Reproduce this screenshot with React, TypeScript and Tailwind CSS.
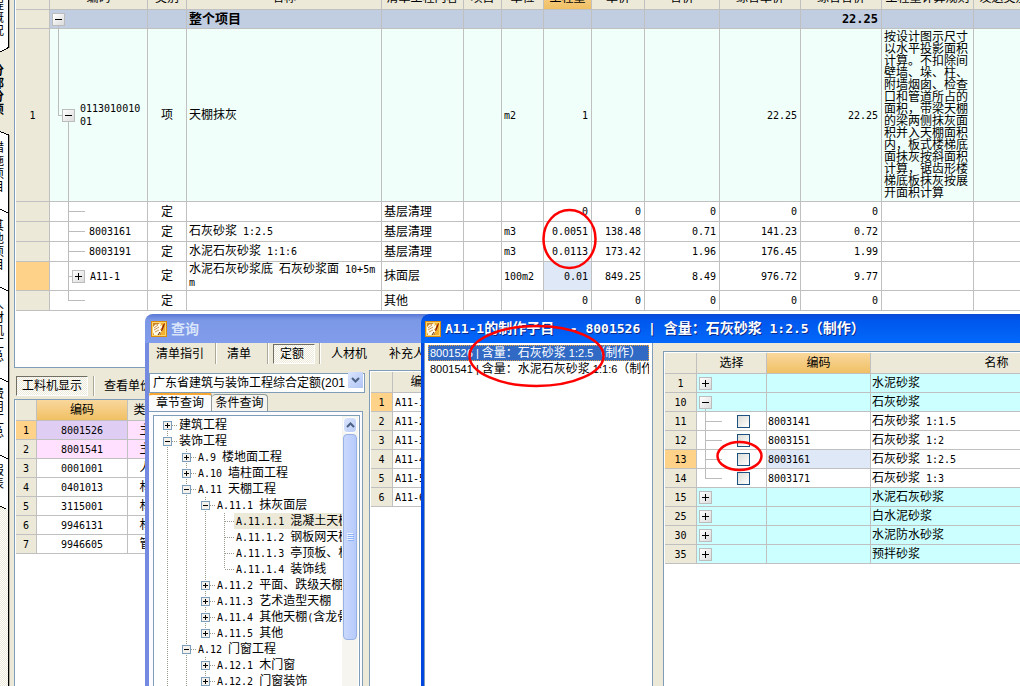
import { useState, type ReactNode } from 'react'
import clsx from 'clsx'

const FONT = "font-['Liberation_Sans','Noto_Sans_CJK_SC',sans-serif]"

// Latin runs use a fixed-pitch face, half as wide as a Chinese character
function T({ children, bold }: { children: string; bold?: boolean }) {
  const runs = children.match(/[\x20-\x7e]+|[^\x20-\x7e]+/g) ?? []
  return (
    <>
      {runs.map((run, i) =>
        /^[\x20-\x7e]/.test(run) ? (
          <span
            key={i}
            className={clsx("font-['DejaVu_Sans_Mono',monospace]", bold ? 'text-[12px]' : 'text-[10px]')}
          >
            {run}
          </span>
        ) : (
          <span key={i}>{run}</span>
        )
      )}
    </>
  )
}

function AppIcon() {
  return (
    <svg viewBox="0 0 16 16" className="h-4 w-4 shrink-0">
      <rect width="16" height="16" fill="#d98a10" />
      <rect x="1" y="1" width="14" height="14" fill="#ffd76a" />
      <rect x="2" y="2" width="12" height="12" fill="#c98428" />
      <path d="M9 2h5v12h-4z" fill="#f3b02c" />
      <path d="M2 6l3-3 1 1 3-2 1 1-1 2 2-1v2L9 9h2l-1 2-2 3H3l-1-3z" fill="#fffbe8" />
      <path d="M3 7l4-3M3 9l5-3M4 11l4-2" stroke="#b5651a" strokeWidth="0.7" />
      <path d="M14 2c-2 1-3 4-4 8h1c1-2 2-4 3-8z" fill="#8d1f0c" />
      <path d="M9 11l-2 3" stroke="#5c2a08" />
    </svg>
  )
}

function Expander({ open, className }: { open?: boolean; className?: string }) {
  const [expanded, setExpanded] = useState(!!open)
  return (
    <button
      aria-label={expanded ? '折叠' : '展开'}
      onClick={() => setExpanded(!expanded)}
      className={clsx(
        'relative block h-[13px] w-[13px] shrink-0 border border-[#bcbcbc] bg-linear-to-br from-white to-[#dcdcdc]',
        className
      )}
    >
      <svg viewBox="0 0 11 11" className="h-[11px] w-[11px]" shapeRendering="crispEdges">
        <path d={expanded ? 'M2 5.5h7' : 'M2 5.5h7M5.5 2v7'} stroke="#000" />
      </svg>
    </button>
  )
}

const cell = 'border-r border-b border-[#c0c0c0] p-0'
const headCell = clsx(cell, 'bg-[#ece9d8] text-center font-normal whitespace-nowrap')
const hotHead = clsx(cell, 'bg-linear-to-b from-[#f9d79c] to-[#f0c062] text-center font-normal whitespace-nowrap')
const numCell = clsx(cell, 'text-center')

const sideTabs = [
  { label: '工程概况', box: 'h-[52px] items-end pb-[14px]' },
  { label: '分部分项', box: 'h-[79px] items-start pt-[13px] font-bold' },
  { label: '措施项目', box: 'h-[79px] items-start pt-[11px]' },
  { label: '其他项目', box: 'h-[79px] items-start pt-[10px]' },
  { label: '人材机汇总', box: 'h-[91px] items-start pt-[10px]' },
  { label: '费用汇总', box: 'h-[77px] items-start pt-[8px]' },
  { label: '报表', box: 'h-[52px] items-start pt-[8px]' },
]

function SideTabs() {
  return (
    <nav className="relative w-[14px] shrink-0 overflow-hidden bg-[#ece9d8]">
      <svg className="absolute inset-0 h-full w-full" shapeRendering="crispEdges">
        <path d="M0 0H8.500V47L0 52z" fill="#fff" />
        <path d="M0 131L8.500 135V510L0 506z" fill="#fff" />
        <path
          d="M8.500 0V47.500L0 52M0 131.500L8.500 135V2000M0 209l8 4M0 287l8 4M0 378l8 4M0 455l8 4M0 506l8 4"
          fill="none"
          stroke="#000"
        />
        <path d="M9.500 0V48M9.500 135V2000" stroke="#aca899" />
      </svg>
      <div className="relative flex h-full flex-col">
        {sideTabs.map((tab) => (
          <button key={tab.label} className={clsx('flex w-[12px] shrink-0', tab.box)}>
            <span className="-ml-2 block w-3 text-[12px] leading-[13px] break-all">{tab.label}</span>
          </button>
        ))}
        <div className="w-2 flex-1 bg-[repeating-conic-gradient(#fff_0_25%,#ece9d8_0_50%)] bg-[length:2px_2px]" />
      </div>
    </nav>
  )
}

const itemColumns = [
  { label: '', width: 'w-[34px]' },
  { label: '编码', width: 'w-[98px]' },
  { label: '类别', width: 'w-[39px]' },
  { label: '名称', width: 'w-[195px]' },
  { label: '清单工程内容', width: 'w-[82px]' },
  { label: '项目', width: 'w-[38px]' },
  { label: '单位', width: 'w-[42px]' },
  { label: '工程量', width: 'w-[48px]' },
  { label: '单价', width: 'w-[53px]' },
  { label: '合价', width: 'w-[75px]' },
  { label: '综合单价', width: 'w-[81px]' },
  { label: '综合合价', width: 'w-[81px]' },
  { label: '工程量计算规则', width: 'w-[92px]' },
  { label: '发送类别', width: 'w-[60px]' },
]

const ruleText =
  '按设计图示尺寸以水平投影面积计算。不扣除间壁墙、垛、柱、附墙烟囱、检查口和管道所占的面积，带梁天棚的梁两侧抹灰面积并入天棚面积内，板式楼梯底面抹灰按斜面积计算，锯齿形楼梯底板抹灰按展开面积计算'

type Item = {
  kind: 'root' | 'item' | 'leaf' | 'group' | 'last'
  no?: string
  code?: string
  type?: string
  name?: string
  content?: string
  unit?: string
  nums: string[]
  rule?: string
  height: string
  bg?: string
}

const items: Item[] = [
  { kind: 'root', name: '整个项目', nums: ['', '', '', '', '22.25'], height: 'h-[19px]', bg: 'bg-[#c1cde0]' },
  {
    kind: 'item', no: '1', code: '011301001001', type: '项', name: '天棚抹灰', unit: 'm2',
    nums: ['1', '', '', '22.25', '22.25'], rule: ruleText, height: 'h-[173px]', bg: 'bg-[#f0fffa]',
  },
  { kind: 'leaf', type: '定', content: '基层清理', nums: ['0', '0', '0', '0', '0'], height: 'h-5' },
  {
    kind: 'leaf', code: '8003161', type: '定', name: '石灰砂浆 1:2.5', content: '基层清理', unit: 'm3',
    nums: ['0.0051', '138.48', '0.71', '141.23', '0.72'], height: 'h-5',
  },
  {
    kind: 'leaf', code: '8003191', type: '定', name: '水泥石灰砂浆 1:1:6', content: '基层清理', unit: 'm3',
    nums: ['0.0113', '173.42', '1.96', '176.45', '1.99'], height: 'h-5',
  },
  {
    kind: 'group', code: 'A11-1', type: '定', name: '水泥石灰砂浆底 石灰砂浆面 10+5mm', content: '抹面层',
    unit: '100m2', nums: ['0.01', '849.25', '8.49', '976.72', '9.77'], height: 'h-[29px]',
  },
  { kind: 'last', type: '定', content: '其他', nums: ['0', '0', '0', '0', '0'], height: 'h-5' },
]

const branchPaths: Record<Item['kind'], ReactNode> = {
  root: <line x1="8.500" x2="8.500" y1="50%" y2="100%" />,
  item: (
    <>
      <line x1="8.500" x2="8.500" y1="0" y2="50%" />
      <line x1="8" x2="14" y1="50%" y2="50%" />
      <line x1="18.500" x2="18.500" y1="50%" y2="100%" />
    </>
  ),
  leaf: (
    <>
      <line x1="18.500" x2="18.500" y1="0" y2="100%" />
      <line x1="18" x2="35" y1="50%" y2="50%" />
    </>
  ),
  group: (
    <>
      <line x1="18.500" x2="18.500" y1="0" y2="100%" />
      <line x1="18" x2="24" y1="50%" y2="50%" />
    </>
  ),
  last: (
    <>
      <line x1="18.500" x2="18.500" y1="0" y2="50%" />
      <line x1="18" x2="35" y1="50%" y2="50%" />
    </>
  ),
}

const codeIndent: Record<Item['kind'], string> = {
  root: 'pl-[2px]',
  item: 'pl-[12px]',
  leaf: 'pl-[39px]',
  group: 'pl-[22px]',
  last: 'pl-[39px]',
}

function ItemTable() {
  return (
    <table className="-mt-[13px] w-[1018px] table-fixed border-separate border-spacing-0 text-[12px] leading-3">
      <thead>
        <tr className="h-[23px]">
          {itemColumns.map((col, i) => (
            <th key={i} className={clsx(col.width, col.label === '工程量' ? hotHead : headCell)}>
              {col.label}
            </th>
          ))}
        </tr>
      </thead>
      <tbody>
        {items.map((item, i) => (
          <tr key={i} className={clsx(item.height, item.bg)}>
            <td className={clsx(numCell, item.kind === 'group' ? 'bg-[#ffd28a]' : 'bg-[#ece9d8]')}>
              <T>{item.no ?? ''}</T>
            </td>
            <td className={clsx(cell, 'relative')}>
              <svg className="absolute inset-0 h-full w-full" stroke="#bcbcbc" shapeRendering="crispEdges">
                {branchPaths[item.kind]}
              </svg>
              <div className={clsx('flex items-center gap-[5px]', codeIndent[item.kind])}>
                {(item.kind === 'root' || item.kind === 'item') && <Expander open />}
                {item.kind === 'group' && <Expander />}
                <span className="relative max-w-[62px] break-all">
                  <T>{item.code ?? ''}</T>
                </span>
              </div>
            </td>
            <td className={numCell}>{item.type}</td>
            <td className={clsx(cell, 'pl-[2px] break-all', item.kind === 'root' && 'text-[13px] font-bold')}>
              <T>{item.name ?? ''}</T>
            </td>
            <td className={clsx(cell, 'pl-[2px]')}>{item.content}</td>
            <td className={cell} />
            <td className={clsx(cell, 'pl-[2px]')}>
              <T>{item.unit ?? ''}</T>
            </td>
            {item.nums.map((num, n) => (
              <td
                key={n}
                className={clsx(
                  cell,
                  'pr-[3px] text-right',
                  item.kind === 'root' && 'font-bold',
                  item.kind === 'group' && n === 0 && 'bg-[#dfe8f6]'
                )}
              >
                <T bold={item.kind === 'root'}>{num}</T>
              </td>
            ))}
            <td className={clsx(cell, 'px-[2px]')}>{item.rule}</td>
            <td className={cell} />
          </tr>
        ))}
      </tbody>
    </table>
  )
}

const materials = [
  { code: '8001526', type: '主', bg: 'bg-[#ffe0ff]' },
  { code: '8001541', type: '主', bg: 'bg-[#ffe0ff]' },
  { code: '0001001', type: '人' },
  { code: '0401013', type: '材' },
  { code: '3115001', type: '材' },
  { code: '9946131', type: '材' },
  { code: '9946605', type: '管' },
]

function MaterialTable() {
  return (
    <table className="w-[148px] table-fixed border-separate border-spacing-0 text-[12px] leading-3">
      <thead>
        <tr className="h-[21px]">
          <th className={clsx(headCell, 'w-[21px]')} />
          <th className={clsx(hotHead, 'w-[91px]')}>编码</th>
          <th className={clsx(headCell, 'w-[36px]')}>类别</th>
        </tr>
      </thead>
      <tbody>
        {materials.map((m, i) => (
          <tr key={m.code} className={clsx('h-[19px]', m.bg)}>
            <td className={clsx(numCell, i === 0 ? 'bg-[#ffd28a]' : 'bg-[#ece9d8]')}>
              <T>{String(i + 1)}</T>
            </td>
            <td className={clsx(numCell, i === 0 && 'bg-[#dfcdf4]')}>
              <T>{m.code}</T>
            </td>
            <td className={numCell}>{m.type}</td>
          </tr>
        ))}
      </tbody>
    </table>
  )
}

const pressed =
  'border border-t-[#716f64] border-l-[#716f64] border-r-white border-b-white bg-[repeating-conic-gradient(#fff_0_25%,#ece9d8_0_50%)] bg-[length:2px_2px]'

function Separator() {
  return <div className="w-[2px] shrink-0 self-stretch border-l border-[#aca899] bg-white" />
}

type Node = {
  depth: number
  label: string
  state?: 'open' | 'closed'
  first?: boolean
  last?: boolean
  selected?: boolean
}

const nodes: Node[] = [
  { depth: 0, label: '建筑工程', state: 'closed', first: true },
  { depth: 0, label: '装饰工程', state: 'open' },
  { depth: 1, label: 'A.9 楼地面工程', state: 'closed' },
  { depth: 1, label: 'A.10 墙柱面工程', state: 'closed' },
  { depth: 1, label: 'A.11 天棚工程', state: 'open' },
  { depth: 2, label: 'A.11.1 抹灰面层', state: 'open' },
  { depth: 3, label: 'A.11.1.1 混凝土天棚', selected: true },
  { depth: 3, label: 'A.11.1.2 钢板网天棚' },
  { depth: 3, label: 'A.11.1.3 亭顶板、板' },
  { depth: 3, label: 'A.11.1.4 装饰线', last: true },
  { depth: 2, label: 'A.11.2 平面、跌级天棚', state: 'closed' },
  { depth: 2, label: 'A.11.3 艺术造型天棚', state: 'closed' },
  { depth: 2, label: 'A.11.4 其他天棚(含龙骨)', state: 'closed' },
  { depth: 2, label: 'A.11.5 其他', state: 'closed', last: true },
  { depth: 1, label: 'A.12 门窗工程', state: 'open' },
  { depth: 2, label: 'A.12.1 木门窗', state: 'closed' },
  { depth: 2, label: 'A.12.2 门窗装饰', state: 'closed' },
]

function TreeRow({ node }: { node: Node }) {
  const axis = 13.5 + node.depth * 19
  const width = 23 + node.depth * 19
  return (
    <li className="flex h-4 items-center whitespace-nowrap">
      <svg width={width} height="16" className="shrink-0" shapeRendering="crispEdges">
        <g stroke="#9a9a8c" strokeDasharray="1 1">
          {Array.from({ length: node.depth }, (_, d) => (
            <path key={d} d={`M${13.5 + d * 19} 0v16`} />
          ))}
          {!node.first && <path d={`M${axis} 0v8`} />}
          {!node.last && <path d={`M${axis} 8v8`} />}
          <path d={`M${axis} 8.500h9`} />
        </g>
        {node.state && (
          <>
            <rect x={axis - 4} y="4.500" width="8" height="8" fill="#f4f2ea" stroke="#7b9ebd" />
            <path
              d={`M${axis - 2.5} 8.500h5${node.state === 'closed' ? `M${axis} 6v5` : ''}`}
              stroke="#000"
            />
          </>
        )}
      </svg>
      <button className={clsx('h-4 shrink-0 pl-[2px] text-left', node.selected && 'grow bg-[#ece9d8]')}>
        <T>{node.label}</T>
      </button>
    </li>
  )
}

function ChapterTree() {
  return (
    <div className="flex min-h-0 flex-1 overflow-hidden border border-b-0 border-[#7f9db9] bg-white pr-[1px]">
      <ul className="min-w-0 flex-1 overflow-hidden pt-[1px] text-[12px] leading-4">
        {nodes.map((node) => (
          <TreeRow key={node.label} node={node} />
        ))}
      </ul>
      <div className="flex w-4 flex-col bg-[#f6f5f0] px-px pt-[1px]">
        <button
          aria-label="向上滚动"
          className="grid h-4 w-full place-items-center rounded-sm border border-white bg-linear-to-br from-[#dbe5fd] to-[#b9cbf6]"
        >
          <svg viewBox="0 0 9 6" className="h-[6px] w-[9px]">
            <path d="M1 5l3.500-3.500L8 5" fill="none" stroke="#4d6185" strokeWidth="2" />
          </svg>
        </button>
        <div className="mt-[1px] grid h-[206px] w-full place-items-center rounded-sm border border-[#98b1e4] bg-linear-to-r from-[#c9d8fc] to-[#b6cafb]">
          <svg viewBox="0 0 7 8" className="h-2 w-[7px]" shapeRendering="crispEdges">
            <path d="M0 .5h6M0 2.500h6M0 4.500h6M0 6.500h6" stroke="#eef4fe" />
            <path d="M1 1.500h6M1 3.500h6M1 5.500h6M1 7.500h6" stroke="#8cb0f8" />
          </svg>
        </div>
      </div>
    </div>
  )
}

function QueryWindow() {
  return (
    <section className="absolute top-[314px] bottom-0 left-[145px] flex w-[320px] flex-col overflow-hidden rounded-tl-lg bg-[#ece9d8]">
      <header className="flex h-[29px] shrink-0 items-center gap-1 bg-linear-to-b from-[#5a78d4] via-[#7b98e6] via-20% to-[#819cea] pl-[6px]">
        <AppIcon />
        <h2 className="text-[14px] leading-4 font-bold text-[#d8e4fa]">查询</h2>
      </header>
      <div className="flex min-h-0 flex-1 flex-col border-l-4 border-[#7489e0]">
        <div className="flex h-[21px] shrink-0 items-center whitespace-nowrap text-[12px] leading-4">
          <button className="w-[66px] pr-[4px]">清单指引</button>
          <Separator />
          <button className="w-[50px] pr-[6px]">清单</button>
          <Separator />
          <button className={clsx(pressed, 'mx-[4px] h-5 w-[42px] pr-[4px]')}>定额</button>
          <Separator />
          <button className="w-[56px]">人材机</button>
          <button className="ml-3 w-[60px] text-left">补充人材机</button>
        </div>
        <div className="flex min-h-0 flex-1 gap-1 pt-[6px]">
          <div className="flex w-[216px] shrink-0 flex-col">
            <div className="relative h-5 shrink-0">
              <select
                aria-label="定额库"
                className="h-5 w-full appearance-none border border-[#7f9db9] bg-white pr-[18px] pl-[3px] text-[12px] leading-4"
              >
                <option>广东省建筑与装饰工程综合定额(201</option>
              </select>
              <span className="pointer-events-none absolute top-[2px] right-[2px] grid h-4 w-[15px] place-items-center bg-linear-to-br from-[#dbe5fd] to-[#b0c4f4]">
                <svg viewBox="0 0 9 6" className="h-[6px] w-[9px]">
                  <path d="M1 1l3.500 3.500L8 1" fill="none" stroke="#4d6185" strokeWidth="2" />
                </svg>
              </span>
            </div>
            <div className="mt-[2px] flex h-[19px] shrink-0 items-end text-[12px] leading-4">
              <button className="h-[19px] w-[63px] rounded-t-sm border-t-[3px] border-r border-t-[#f7a834] border-r-[#919b9c] bg-[#fcfcfe]">
                章节查询
              </button>
              <button className="h-[17px] w-[56px] rounded-t-sm border border-b-0 border-l-0 border-[#919b9c] bg-[#f5f4ee]">
                条件查询
              </button>
            </div>
            <div className="mr-[2px] flex min-h-0 flex-1 border-t border-r border-[#7f9db9] bg-[#fcfcfe] px-1 pt-[3px] pr-[2px]">
              <ChapterTree />
            </div>
          </div>
          <div className="flex-1 border-t border-l border-[#7f9db9] bg-white pt-px pl-px">
            <table className="w-[82px] table-fixed border-separate border-spacing-0 text-[12px] leading-3">
              <thead>
                <tr className="h-[21px]">
                  <th className={clsx(headCell, 'w-[22px]')} />
                  <th className={clsx(headCell, 'w-[60px]')}>编码</th>
                </tr>
              </thead>
              <tbody>
                {[1, 2, 3, 4, 5, 6].map((n) => (
                  <tr key={n} className="h-[19px]">
                    <td className={clsx(numCell, n === 1 ? 'bg-[#ffd28a]' : 'bg-[#ece9d8]')}>
                      <T>{String(n)}</T>
                    </td>
                    <td className={clsx(cell, 'pl-[2px]')}>
                      <T>{`A11-${n}`}</T>
                    </td>
                  </tr>
                ))}
              </tbody>
            </table>
          </div>
        </div>
      </div>
    </section>
  )
}

const mortars = [
  { no: '1', name: '水泥砂浆', kind: 'closed' },
  { no: '10', name: '石灰砂浆', kind: 'open' },
  { no: '11', code: '8003141', name: '石灰砂浆 1:1.5', kind: 'leaf' },
  { no: '12', code: '8003151', name: '石灰砂浆 1:2', kind: 'leaf' },
  { no: '13', code: '8003161', name: '石灰砂浆 1:2.5', kind: 'leaf' },
  { no: '14', code: '8003171', name: '石灰砂浆 1:3', kind: 'last' },
  { no: '15', name: '水泥石灰砂浆', kind: 'closed' },
  { no: '25', name: '白水泥砂浆', kind: 'closed' },
  { no: '30', name: '水泥防水砂浆', kind: 'closed' },
  { no: '35', name: '预拌砂浆', kind: 'closed' },
]

function MortarTable() {
  return (
    <table className="w-[458px] table-fixed border-separate border-spacing-0 text-[12px] leading-3">
      <thead>
        <tr className="h-[21px]">
          <th className={clsx(headCell, 'w-[32px]')} />
          <th className={clsx(headCell, 'w-[70px]')}>选择</th>
          <th className={clsx(hotHead, 'w-[104px]')}>编码</th>
          <th className={clsx(headCell, 'w-[252px]')}>名称</th>
        </tr>
      </thead>
      <tbody>
        {mortars.map((m) => {
          const isGroup = m.kind === 'open' || m.kind === 'closed'
          const current = m.no === '13'
          return (
            <tr key={m.no} className={clsx('h-[19px]', isGroup && 'bg-[#ccffff]')}>
              <td className={clsx(numCell, current ? 'bg-[#ffd28a]' : 'bg-[#ece9d8]')}>
                <T>{m.no}</T>
              </td>
              <td className={clsx(cell, 'relative')}>
                {m.kind !== 'closed' && (
                  <svg className="absolute inset-0 h-full w-full" stroke="#bcbcbc" shapeRendering="crispEdges">
                    <line x1="8.500" x2="8.500" y1={m.kind === 'open' ? '50%' : '0'} y2={m.kind === 'last' ? '50%' : '100%'} />
                    {!isGroup && <line x1="8" x2="25" y1="50%" y2="50%" />}
                  </svg>
                )}
                {isGroup ? (
                  <Expander open={m.kind === 'open'} className="ml-[2px]" />
                ) : (
                  <input
                    type="checkbox"
                    aria-label={m.name}
                    className="relative ml-10 block h-[13px] w-[13px] appearance-none border border-[#1c5180] bg-linear-to-br from-[#dcdcd7] to-white checked:from-[#21a121]"
                  />
                )}
              </td>
              <td className={clsx(cell, 'pl-[1px]', current && 'bg-[#dfe8f6]')}>
                <T>{m.code ?? ''}</T>
              </td>
              <td className={clsx(cell, 'pl-[1px]')}>
                <T>{m.name}</T>
              </td>
            </tr>
          )
        })}
      </tbody>
    </table>
  )
}

function SubItemWindow() {
  return (
    <section className="absolute top-[314px] right-0 bottom-0 left-[421px] flex flex-col overflow-hidden rounded-tl-lg bg-[#ece9d8]">
      <header className="flex h-[29px] shrink-0 items-center gap-1 bg-linear-to-b from-[#0a4ad8] via-[#0058ee] via-25% to-[#0368fb] pl-1">
        <AppIcon />
        <h2 className="text-[14px] leading-4 font-bold whitespace-nowrap text-white [text-shadow:1px_1px_#0a2a8c]">
          <span className="font-['DejaVu_Sans_Mono',monospace] text-[13px]">A11-1</span>
          的制作子目
          <span className="font-['DejaVu_Sans_Mono',monospace] text-[13px] whitespace-pre">{'  - 8001526 | '}</span>
          含量：石灰砂浆
          <span className="font-['DejaVu_Sans_Mono',monospace] text-[13px] whitespace-pre"> 1:2.5</span>
          （制作）
        </h2>
      </header>
      <div className="flex min-h-0 flex-1 border-l-[3px] border-[#0046e0]">
        <ul className="w-[229px] shrink-0 overflow-hidden border-r border-l border-[#7f9db9] bg-white px-[3px] pt-[2px] text-[12px] leading-4">
          <li className="h-4 overflow-hidden border border-dotted border-[#e0a040] bg-[#316ac5] pl-[1px] leading-[14px] whitespace-nowrap text-white">
            <span className="text-[11px]">8001526 | </span>含量：石灰砂浆
            <span className="text-[11px]"> 1:2.5</span>（制作）
          </li>
          <li className="h-4 overflow-hidden pl-[2px] whitespace-nowrap">
            <span className="text-[11px]">8001541 | </span>含量：水泥石灰砂浆
            <span className="text-[11px]"> 1:1:6</span>（制作）
          </li>
        </ul>
        <div className="flex min-w-0 flex-1 pt-2 pl-[10px]">
          <div className="min-w-0 flex-1 overflow-hidden border-t border-l border-[#7f9db9] bg-white pt-px pl-px">
            <MortarTable />
          </div>
        </div>
      </div>
    </section>
  )
}

export default function App() {
  return (
    <div className={clsx('relative flex h-screen overflow-hidden bg-[#ece9d8] text-black', FONT)}>
      <SideTabs />
      <main className="flex min-w-0 flex-1 flex-col">
        <div className="h-[368px] shrink-0 overflow-hidden border-b border-l border-[#7f9db9] bg-white pl-px">
          <ItemTable />
        </div>
        <div className="flex h-[31px] shrink-0 items-center gap-[5px] pt-[5px] pl-[2px] text-[12px] leading-4">
          <button className={clsx(pressed, 'h-5 w-[72px]')}>工料机显示</button>
          <div className="flex h-5">
            <Separator />
          </div>
          <button className="ml-1">查看单价构成</button>
        </div>
        <div className="min-h-0 flex-1 overflow-hidden border-t border-l border-[#7f9db9] bg-white pl-px">
          <MaterialTable />
        </div>
      </main>
      <QueryWindow />
      <SubItemWindow />
      <svg className="pointer-events-none absolute inset-0 h-full w-full" fill="none" stroke="#f00" strokeWidth="2.500">
        <ellipse cx="569.500" cy="239" rx="26" ry="29" />
        <ellipse cx="536.500" cy="356" rx="67" ry="30" />
        <ellipse cx="739.500" cy="456" rx="22" ry="14" />
      </svg>
    </div>
  )
}
